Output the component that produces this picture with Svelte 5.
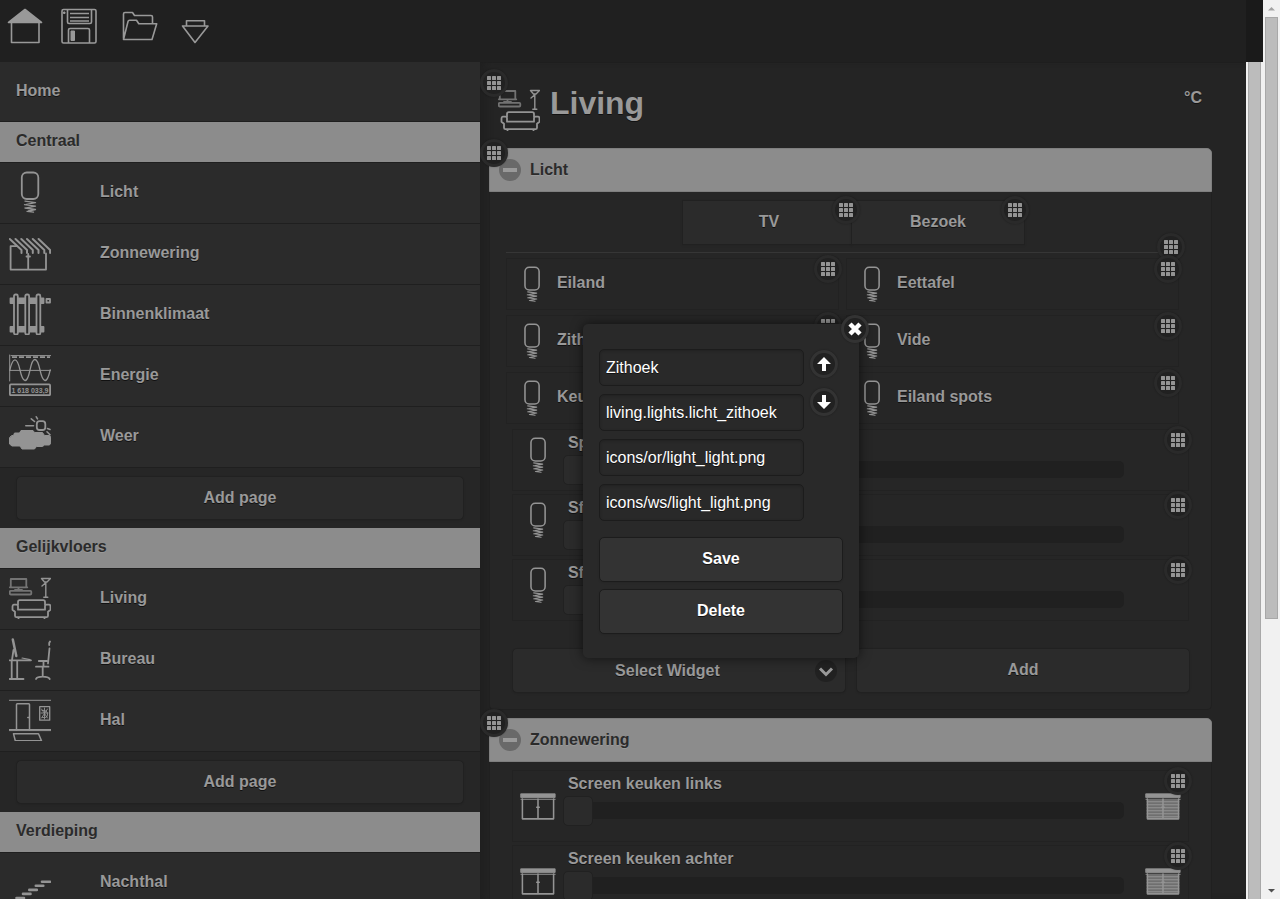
<script>
  const sections = [
    {
      title: 'Centraal',
      pages: [
        { name: 'Licht', icon: 'bulb' },
        { name: 'Zonnewering', icon: 'awning' },
        { name: 'Binnenklimaat', icon: 'radiator' },
        { name: 'Energie', icon: 'energy' },
        { name: 'Weer', icon: 'weather' }
      ]
    },
    {
      title: 'Gelijkvloers',
      pages: [
        { name: 'Living', icon: 'living' },
        { name: 'Bureau', icon: 'desk' },
        { name: 'Hal', icon: 'hall' }
      ]
    },
    { title: 'Verdieping', pages: [{ name: 'Nachthal', icon: 'stairs' }] }
  ];

  const lights = ['Eiland', 'Eettafel', 'Zithoek', 'Vide', 'Keuken', 'Eiland spots'];
  const dimmers = ['Spots', 'Sfeer', 'Sfeer'];
  const screens = ['Screen keuken links', 'Screen keuken achter'];

  let fields = $state([
    { label: 'Title', value: 'Zithoek' },
    { label: 'Item', value: 'living.lights.licht_zithoek' },
    { label: 'Icon on', value: 'icons/or/light_light.png' },
    { label: 'Icon off', value: 'icons/ws/light_light.png' }
  ]);
</script>

{#snippet icon(name, size)}
  <svg class="icon" width={size} height={size} viewBox="0 0 42 42" aria-hidden="true">
    {#if name === 'bulb'}
      <rect x="12.800" y="1.500" width="16.500" height="26.500" rx="5" />
      <path d="M16 30.200l10.500 1.500M15.500 33.600l11 1.500M16 37l10.500 1.500M18 40.300l6.500 .9M26.500 31.700l-9 1.700M26.500 35.100l-9 1.700M26.500 38.500l-7 1.500" stroke-width="1.3" />
    {:else if name === 'awning'}
      <path d="M.8 7l11.700 11v3M6.500 7l11.500 11v3M12.300 7l11.500 11v3M18 7l11.500 11v3M23.800 7l11.500 11v3M29.600 7l11.500 11v3" stroke-width="2" />
      <path d="M8 14.200H1.600V37.600H37V21.500M19.200 22V37.600M17.500 24.500h3.500" />
    {:else if name === 'radiator'}
      <path d="M1.500 5.500h33v4.500h-33zM1.500 34h33v4.500h-33z" fill="currentColor" />
      <rect class="hollow" x="5" y="1.500" width="3.800" height="40" rx="1.5" />
      <rect class="hollow" x="16.300" y="1.500" width="3.800" height="40" rx="1.5" />
      <rect class="hollow" x="27.500" y="1.500" width="3.800" height="40" rx="1.5" />
      <rect x="37.500" y="6" width="3.500" height="3.500" />
    {:else if name === 'energy'}
      <path d="M2 1.600H42M.7 1v26M.7 16.400H42" stroke-width="1" />
      <path d="M3 3.200H41" stroke-dasharray="5 2" stroke-width="1.7" stroke-linecap="butt" />
      <path d="M.8 16C4 2.500 8 2.500 11 16S18 30.500 21 16 28 2.500 31 16 38 30.500 41.200 16" stroke-width="1.3" />
      <rect x=".9" y="30.400" width="40.200" height="10.800" rx="1" />
      <text x="21" y="38.500" text-anchor="middle">1 618 033,9</text>
    {:else if name === 'weather'}
      <path d="M3 20.500h1.500l1-2.500h5l1.500-2.500h12l1.500 2h8l2 3h5l1.500 2v5l-1.500 2.500h-5l-2 1.500h-6l-2 2.500H13l-2-3H3l-2.500-2v-6z" fill="currentColor" stroke-width="1" />
      <rect x="27.800" y="6.200" width="8.500" height="8.800" rx="2.800" />
      <path d="M16.800 10.700H24.500M22.300 3.800l3.200 2.700M27.300 1.800l1.200 2M38.500 13.500l2.500 1M38 16.800l3 3" stroke-width="1.6" />
    {:else if name === 'living'}
      <g class="dim">
        <path d="M1.800 2h15.500v8.300H1.800zM.8 10.300h17.500M9.500 10.500v2M6 12.800h7" />
        <rect x=".8" y="13.800" width="21.500" height="3.700" rx="1" />
      </g>
      <path d="M32.500 1.500H41.500L38 5h-2.500L32.500 1.500M36.800 5V20M34.800 20.200h4M36.500 6l-3.500 3" stroke-width="1.4" />
      <path d="M9 32.700v-3.500q0-1.500-1.500-1.500h-2.500q-1.500 0-1.500 2v3l2.500 2v4q0 1.500 1.500 1.500h30q1.500 0 1.500-1.500v-4l2.500-2v-3q0-2-1.500-2h-2.500q-1.500 0-1.500 1.500V32.700zM9 28v-3q0-1.800 1.800-1.800h23.400q1.800 0 1.800 1.800v3M9.500 40.500v1M35.500 40.500v1" />
    {:else if name === 'desk'}
      <path d="M3.800 1.500l3.500 16.500" stroke-width="2.500" />
      <path d="M4.500 12l-1.500 10M.5 22.300H22M2.700 22.300V41M8.200 22.300V41M.5 41h14" />
      <path d="M13 20l8 1.600" stroke-width="1.2" />
      <path d="M41 3.500l-.8 1.500v2M40.500 10.500L39 25.500M29.800 23h8M27 28.700h12.500M33.700 29V38.700M27 41q1-2.300 6.700-2.300t7 2.300M34.500 24v4" />
    {:else if name === 'hall'}
      <path d="M0 1.300H42M0 30.500H42M0 31.600H42" stroke-width="1" />
      <path d="M7.500 31V5.500q0-.8 .8-.8h11.400q.8 0 .8 .8V31M18.800 18.500h1.500M4.500 34.800H29.500L32.500 41.800H6.300z" stroke-width="1.5" />
      <rect x="30.700" y="7.700" width="10" height="13.500" stroke-width="1.300" />
      <path d="M32.500 10l6 9M38.500 10l-6 9M35.500 9v11M32 14h7M33 11.500q5-1 5.500 3.500t-5 3.500" stroke-width=".9" />
    {:else if name === 'stairs'}
      <path d="M33 20.700h8M26.800 24.700h7.500M20.300 28.900h7.500M14 32.900h7.500M7.500 37h7.500M1.500 41h7.500" stroke-width="2.600" />
    {:else if name === 'window' || name === 'blind'}
      <path d="M1.200 6.800H41V11H1.200z" fill="currentColor" stroke-width="1" />
      <path d="M1.200 13.200H41" stroke-width="1.2" />
      {#if name === 'blind'}
        <path class="slats" d="M2.500 13H39.500V36H2.500z" />
        <path d="M2.500 16H39.500M2.500 19.500H39.500M2.500 23H39.500M2.500 26.500H39.500M2.500 30H39.500M2.500 33.500H39.500" stroke-width="1.2" />
      {/if}
      <path d="M2.800 13V36H39.200V13M21 13V36M19.500 22.500h3" />
    {/if}
  </svg>
{/snippet}

{#snippet grip()}
  <button class="disc grip" aria-label="Edit">
    <svg width="14" height="14" viewBox="0 0 14 14" aria-hidden="true">
      {#each [0, 5, 10] as y}
        {#each [0, 5, 10] as x}
          <rect {x} {y} width="4" height="4" rx=".5" />
        {/each}
      {/each}
    </svg>
  </button>
{/snippet}

{#snippet panelHead(title)}
  <div class="panel-head">
    {@render grip()}
    <span class="collapse" aria-hidden="true"></span>
    <h2>{title}</h2>
  </div>
{/snippet}

{#snippet slider(name, id, kind)}
  <div class="slide {kind}">
    {@render icon(kind === 'screen' ? 'window' : 'bulb', 36)}
    <div class="slide-main">
      <label for={id}>{name}</label>
      <input {id} type="range" min="0" max="255" value="0" />
    </div>
    <div class="slide-end">
      {#if kind === 'screen'}{@render icon('blind', 36)}{/if}
    </div>
    {@render grip()}
  </div>
{/snippet}

<div class="window">
  <div class="page">
    <header>
      <nav class="tools">
        <button aria-label="Home">
          <svg width="60" height="56" viewBox="0 0 60 56"><path d="M8.500 22.500L25 9.500 41.500 22.500z" fill="currentColor" /><path d="M11.500 22.500V42.500H39V22.500" /></svg>
        </button>
        <button aria-label="Save">
          <svg width="60" height="56" viewBox="0 0 60 56">
            <rect x="2" y="9.500" width="34" height="33.500" rx="1.500" />
            <path d="M7.500 10v12q0 1.500 1.500 1.500h21q1.500 0 1.500-1.500V10M8.500 43V30q0-1.500 1.500-1.500h18q1.500 0 1.500 1.500V43M10 13.500H29M10 17.500H29M10 21H29" />
            <path d="M11 31h3.500v9.500h-3.500zM3.500 12h1.500v1.500H3.500z" fill="currentColor" stroke-width="1" />
          </svg>
        </button>
        <button aria-label="Open">
          <svg width="60" height="56" viewBox="0 0 60 56"><path d="M3.500 38.500V14q0-1.500 1.500-1.500h7.500l2 3H31q1.500 0 1.500 1.500v6.500M3.500 39.500L8 21.500q.3-1.300 1.500-1.300h7l2.300 3.600H36.700L32 39.500z" /></svg>
        </button>
        <button aria-label="Insert">
          <svg width="60" height="56" viewBox="0 0 60 56"><path d="M6.500 25.500V20.800H24.500V25.500M2.500 26H28L15 42.500z" /></svg>
        </button>
      </nav>
    </header>

    <div class="columns">
      <aside>
        <a class="home" href="#home">Home</a>
        {#each sections as section, i}
          <h3>{section.title}</h3>
          <ul>
            {#each section.pages as p}
              <li><a href="#{p.name}">{@render icon(p.icon, 42)}<span>{p.name}</span></a></li>
            {/each}
          </ul>
          {#if i < 2}
            <div class="add-page"><button class="btn">Add page</button></div>
          {/if}
        {/each}
      </aside>

      <main>
        <div class="title">
          {@render grip()}
          {@render icon('living', 42)}
          <h1>Living</h1>
          <span class="temp">°C</span>
        </div>

        <section>
          {@render panelHead('Licht')}
          <div class="panel-body">
            <div class="choices">
              <div class="choice"><button class="btn">TV</button>{@render grip()}</div>
              <div class="choice"><button class="btn">Bezoek</button>{@render grip()}</div>
            </div>
            <div class="divider">{@render grip()}</div>
            <div class="lights">
              {#each lights as name}
                <div class="light">{@render icon('bulb', 36)}<span>{name}</span>{@render grip()}</div>
              {/each}
            </div>
            <div class="slides">
              {#each dimmers as name, i}{@render slider(name, `dim${i}`, 'dimmer')}{/each}
            </div>
            <div class="adder">
              <div class="pick">
                <select class="btn" aria-label="Widget"><option>Select Widget</option></select>
                <span class="chevron" aria-hidden="true">
                  <svg width="22" height="22" viewBox="0 0 22 22"><path d="M5 8.500l6 6 6-6" /></svg>
                </span>
              </div>
              <button class="btn">Add</button>
            </div>
          </div>
        </section>

        <section>
          {@render panelHead('Zonnewering')}
          <div class="panel-body">
            <div class="slides">
              {#each screens as name, i}{@render slider(name, `screen${i}`, 'screen')}{/each}
            </div>
          </div>
        </section>
      </main>
      <div class="bar inner" aria-hidden="true"><div class="thumb"></div></div>
    </div>

    <div class="popup" role="dialog" aria-label="Edit widget">
      <button class="disc close" aria-label="Close">
        <svg width="16" height="16" viewBox="0 0 16 16"><path d="M3 3l10 10M13 3l-10 10" stroke-width="4.500" stroke="#fff" /></svg>
      </button>
      <div class="popup-top">
        <div class="fields">
          {#each fields as f}
            <input type="text" aria-label={f.label} bind:value={f.value} />
          {/each}
        </div>
        <div class="moves">
          <button class="disc" aria-label="Move up">
            <svg width="14" height="14" viewBox="0 0 14 14"><path d="M7 0l7 7H9v7H5V7H0z" fill="#fff" stroke="none" /></svg>
          </button>
          <button class="disc" aria-label="Move down">
            <svg width="14" height="14" viewBox="0 0 14 14"><path d="M7 14l7-7H9V0H5v7H0z" fill="#fff" stroke="none" /></svg>
          </button>
        </div>
      </div>
      <div class="popup-actions">
        <button class="btn">Save</button>
        <button class="btn">Delete</button>
      </div>
    </div>
  </div>

  <div class="bar outer" aria-hidden="true">
    <svg class="arrow up" width="17" height="17" viewBox="0 0 17 17"><path d="M5 10.500h7L8.500 7z" /></svg>
    <div class="thumb"></div>
    <svg class="arrow" width="17" height="17" viewBox="0 0 17 17"><path d="M5 7h7l-3.500 3.500z" /></svg>
  </div>
</div>

<style>
  :global(body) {
    margin: 0;
    background: #242424;
    overflow: hidden;
  }
  .window {
    display: flex;
    height: 100vh;
    overflow: hidden;
    font: bold 16px/20px 'Liberation Sans', Arial, sans-serif;
    color: #999;
    text-shadow: 0 1px 0 #111;
  }
  .window * {
    box-sizing: border-box;
  }
  button,
  input,
  select {
    font: inherit;
    color: inherit;
    text-shadow: inherit;
    margin: 0;
  }
  button {
    padding: 0;
    border: 0;
    background: none;
  }
  h1,
  h2,
  h3,
  ul {
    margin: 0;
    padding: 0;
    font-size: 16px;
    list-style: none;
  }
  a {
    color: inherit;
    text-decoration: none;
  }
  svg {
    display: block;
    flex: none;
    fill: none;
    stroke: currentColor;
    stroke-width: 1.6;
    stroke-linejoin: round;
  }
  .icon {
    color: #949494;
    stroke-width: 1.8;
    stroke-linecap: round;
  }
  .icon text {
    font: bold 7px 'Liberation Sans', Arial, sans-serif;
    fill: currentColor;
    stroke: none;
    text-shadow: none;
  }
  .icon .slats {
    fill: #6f6f6f;
    stroke: none;
  }
  .hollow {
    fill: #2b2b2b;
  }
  .dim {
    opacity: 0.7;
  }

  .page {
    position: relative;
    flex: 1;
    min-width: 0;
    display: flex;
    flex-direction: column;
  }
  header {
    flex: none;
    height: 62px;
    padding-right: 17px;
    background: linear-gradient(#202020, #202020) content-box, #1a1a1a;
  }
  .tools {
    display: flex;
  }
  .columns {
    flex: 1;
    min-height: 0;
    display: flex;
    overflow: hidden;
  }

  aside {
    flex: none;
    width: 38%;
    overflow: hidden;
    background: #262626;
  }
  .home {
    display: block;
    height: 60px;
    padding: 19px 16px;
    background: #2b2b2b;
    border-bottom: 1px solid #1f1f1f;
  }
  h3,
  h2 {
    color: #2b2b2b;
    text-shadow: 0 1px 0 #999;
  }
  h3 {
    height: 40px;
    padding: 9px 16px;
    background: #8c8c8c;
  }
  li a {
    display: flex;
    align-items: center;
    height: 61px;
    padding: 0 0 2px 9px;
    background: #2b2b2b;
    border-top: 1px solid #1f1f1f;
  }
  li span {
    margin-left: 49px;
  }
  .add-page {
    padding: 8px 16px;
    border-top: 1px solid #1f1f1f;
  }
  .btn {
    display: block;
    width: 100%;
    height: 45px;
    padding: 0 0 2px;
    border: 1px solid #212121;
    border-radius: 5px;
    background: #2b2b2b;
    text-align: center;
    box-shadow: 0 1px 2px rgba(0, 0, 0, 0.08);
  }
  .add-page .btn {
    height: 44px;
    padding: 0;
  }

  main {
    flex: 1;
    min-width: 0;
    padding: 0 34px 0 9px;
    overflow: hidden;
    background: #242424;
    box-shadow: inset 8px 0 8px -4px #1f1f1f, inset 0 1px 0 #1f1f1f;
  }
  .title {
    position: relative;
    display: flex;
    height: 86px;
    padding: 27px 10px 0 9px;
  }
  h1 {
    flex: 1;
    margin: -6px 0 0 10px;
    font-size: 32px;
    line-height: 40px;
  }
  .temp {
    margin-top: -1px;
  }

  .disc {
    display: grid;
    place-items: center;
    width: 28px;
    height: 28px;
    border: 3px solid #2a2a2a;
    border-radius: 50%;
    background: #212121;
    box-shadow: 0 0 2px rgba(0, 0, 0, 0.3);
  }
  .grip {
    position: absolute;
    top: -3px;
    right: -3px;
    z-index: 1;
  }
  .grip svg {
    fill: #949494;
    stroke: none;
  }
  .title .grip {
    top: 7px;
    left: -9px;
  }
  .panel-head .grip {
    top: -10px;
    left: -10px;
  }

  section {
    margin-bottom: 8px;
  }
  .panel-head {
    position: relative;
    display: flex;
    align-items: center;
    gap: 9px;
    height: 44px;
    padding-left: 9px;
    border: 1px solid #7f7f7f;
    border-radius: 0 5px 0 0;
    background: #8c8c8c;
  }
  .panel-head h2 {
    padding-bottom: 1px;
  }
  .collapse {
    display: grid;
    place-items: center;
    width: 22px;
    height: 22px;
    border-radius: 50%;
    background: #696969;
  }
  .collapse::before {
    content: '';
    width: 14px;
    height: 4px;
    background: #999;
  }
  .panel-body {
    padding: 8px 0 16px;
    border: 1px solid #202020;
    border-top: 0;
    border-radius: 0 0 5px 5px;
    background: #262626;
  }
  .choices {
    display: flex;
    justify-content: center;
    margin: 0 16px 0 22px;
  }
  .choice {
    position: relative;
    width: 170px;
  }
  .choice + .choice {
    width: 174px;
    margin-left: -1px;
  }
  .choice .btn {
    border-radius: 0;
  }
  .choice:first-child .btn {
    padding-left: 4px;
  }
  .choice .grip {
    top: -4px;
    right: -8px;
  }
  .choice + .choice .grip {
    right: -4px;
  }
  .divider {
    position: relative;
    margin: 7px 33px 5px 16px;
    border-top: 1px solid #363636;
  }
  .divider .grip {
    top: -20px;
    right: -7px;
  }
  .lights {
    display: grid;
    grid-template-columns: 1fr 1fr;
    gap: 5px 7px;
    margin: 0 32px 5px 16px;
  }
  .light {
    position: relative;
    display: flex;
    align-items: center;
    height: 52px;
    padding: 0 0 1px 7px;
    border: 1px solid #222;
  }
  .light > span {
    margin-left: 7px;
    padding-bottom: 2px;
  }
  .slides {
    display: grid;
    gap: 3px;
    margin: 0 22px;
  }
  .slide {
    position: relative;
    display: flex;
    height: 62px;
    padding-left: 7px;
    border: 1px solid #222;
  }
  .dimmer .icon {
    margin-top: 7px;
  }
  .screen {
    height: 72px;
  }
  .screen .icon {
    margin-top: 17px;
  }
  .slide-main {
    flex: 1;
    margin-left: 7px;
  }
  .slide-end {
    width: 64px;
    padding-left: 21px;
  }
  .slide .grip,
  .light .grip {
    top: -4px;
    right: -4px;
  }
  .slide label {
    display: block;
    padding: 3px 5px 1px;
  }
  input[type='range'] {
    display: block;
    appearance: none;
    width: 100%;
    height: 30px;
    background: none;
  }
  input[type='range']::-webkit-slider-runnable-track {
    height: 17px;
    border-radius: 5px;
    background: #202020;
  }
  input[type='range']::-webkit-slider-thumb {
    appearance: none;
    width: 30px;
    height: 30px;
    margin-top: -6px;
    border: 1px solid #212121;
    border-radius: 5px;
    background: #2b2b2b;
  }
  .adder {
    display: grid;
    grid-template-columns: 1fr 1fr;
    gap: 10px;
    margin: 27px 21px 0 22px;
  }
  .pick {
    position: relative;
  }
  select.btn {
    appearance: none;
    padding: 0 23px 0 0;
    text-align-last: center;
  }
  .chevron {
    position: absolute;
    top: 12px;
    right: 9px;
    border-radius: 50%;
    background: #212121;
    pointer-events: none;
  }
  .chevron svg {
    stroke-width: 3;
    stroke-linejoin: miter;
  }

  .popup {
    position: absolute;
    top: 324px;
    left: 583px;
    z-index: 5;
    width: 276px;
    padding: 25px 16px 24px;
    border-radius: 5px;
    background: #292929;
    color: #fff;
    box-shadow: 0 0 12px rgba(0, 0, 0, 0.6);
  }
  .close {
    position: absolute;
    top: -9px;
    right: -10px;
  }
  .popup .disc {
    border-color: #333;
  }
  .popup-top {
    display: flex;
    gap: 6px;
  }
  .fields {
    display: grid;
    gap: 8px;
    width: 205px;
  }
  .fields input {
    width: 100%;
    height: 37px;
    padding: 1px 6px 0;
    border: 1px solid #1c1c1c;
    border-radius: 5px;
    outline: 0;
    background: #292929;
    font-weight: normal;
    box-shadow: inset 0 1px 3px rgba(0, 0, 0, 0.2);
  }
  .moves {
    display: grid;
    align-content: start;
    gap: 10px;
    padding-top: 1px;
  }
  .popup-actions {
    display: grid;
    gap: 7px;
    margin-top: 16px;
  }
  .popup .btn {
    border-color: #1c1c1c;
    background: #333;
  }

  .bar {
    flex: none;
    width: 17px;
    padding: 0 2px;
    background: #f1f1f1;
  }
  .thumb {
    border: 1px solid #a8a8a8;
    background: #bcbcbc;
  }
  .inner .thumb {
    height: 100%;
    border-width: 0 1px;
  }
  .outer {
    display: flex;
    flex-direction: column;
  }
  .outer .thumb {
    height: 67%;
    margin-bottom: auto;
  }
  .arrow {
    margin-left: -2px;
    fill: #505050;
    stroke: none;
  }
  .arrow.up {
    fill: #a3a3a3;
  }
</style>
